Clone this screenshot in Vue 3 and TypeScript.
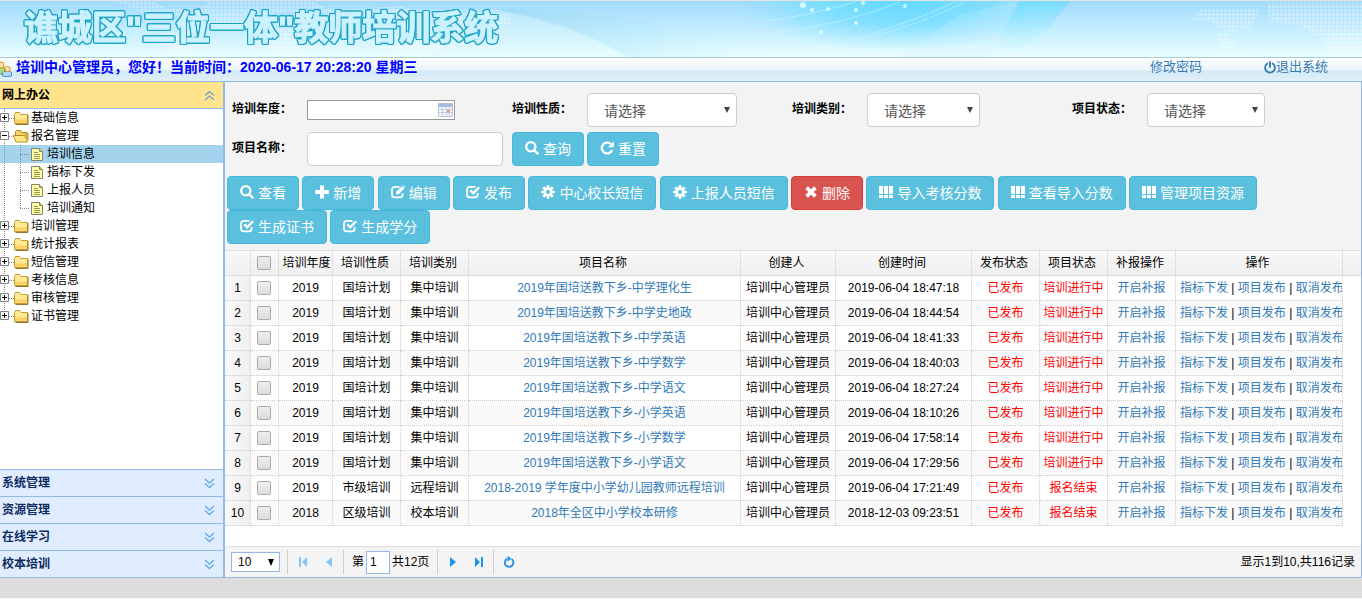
<script setup lang="ts">
import { ref } from 'vue'

interface Glyph { line?: string; fill?: string; width?: number }
interface Action { label: string; icon: string; danger?: boolean }
interface Project { year: string; kind: string; type: string; name: string; time: string; state: string }

const glyphs: Record<string, Glyph> = {
  search: { line: 'M10.400 5.800a4.600 4.600 0 1 1-9.200 0a4.600 4.600 0 0 1 9.200 0zM9 9L13.300 13.300', width: 2.3 },
  plus: { fill: 'M5 .500h4V5h4.800v4H9v4.500H5V9H.2V5H5z' },
  edit: { line: 'M8.500 1.800H3.700A2.700 2.700 0 0 0 1 4.500v5.200a2.700 2.700 0 0 0 2.700 2.700h5.200a2.700 2.700 0 0 0 2.700-2.700V8.500', fill: 'M4.800 9.600l.7-3.100 5.200-5.200 2.400 2.400-5.200 5.200zM11.300.7l.7-.7 2.200 2.200-.7.8z', width: 1.8 },
  check: { line: 'M9.500 1.800H3.700A2.700 2.700 0 0 0 1 4.500v5.200a2.700 2.700 0 0 0 2.700 2.700h5.200a2.700 2.700 0 0 0 2.700-2.700V8', fill: 'M3.400 6L5 4.400l2.200 2.200L12.300 1.400 14 3.100l-6.800 6.800z', width: 1.8 },
  cog: { line: 'M10.400 7a3.400 3.400 0 1 1-6.800 0a3.400 3.400 0 0 1 6.800 0zM7 .2v2.800M7 11v2.800M.2 7H3M11 7h2.800M2.200 2.200l1.900 1.900M9.900 9.900l1.900 1.900M2.200 11.800l1.900-1.900M9.900 4.100l1.900-1.900', width: 2.7 },
  remove: { line: 'M2.600 2.600l8.800 8.800M11.400 2.600l-8.800 8.800', width: 3.8 },
  grid: { fill: 'M0 1h4v8H0zM5 1h4v8H5zM10 1h4v8h-4zM0 10h4v3H0zM5 10h4v3H5zM10 10h4v3h-4z' },
  repeat: { line: 'M10.900 3A5.400 5.400 0 1 0 12.200 9', fill: 'M13.800.2v6H7.800z', width: 2.3 },
}

const actions: Action[] = [
  { label: '查看', icon: 'search' },
  { label: '新增', icon: 'plus' },
  { label: '编辑', icon: 'edit' },
  { label: '发布', icon: 'check' },
  { label: '中心校长短信', icon: 'cog' },
  { label: '上报人员短信', icon: 'cog' },
  { label: '删除', icon: 'remove', danger: true },
  { label: '导入考核分数', icon: 'grid' },
  { label: '查看导入分数', icon: 'grid' },
  { label: '管理项目资源', icon: 'grid' },
  { label: '生成证书', icon: 'check' },
  { label: '生成学分', icon: 'check' },
]
const queries: Action[] = [
  { label: '查询', icon: 'search' },
  { label: '重置', icon: 'repeat' },
]

const tree = [
  { label: '基础信息' },
  { label: '报名管理', children: ['培训信息', '指标下发', '上报人员', '培训通知'] },
  { label: '培训管理' },
  { label: '统计报表' },
  { label: '短信管理' },
  { label: '考核信息' },
  { label: '审核管理' },
  { label: '证书管理' },
]
const active = ref('培训信息')
const panels = ['系统管理', '资源管理', '在线学习', '校本培训']

const national = (subject: string, time: string): Project => ({
  year: '2019', kind: '国培计划', type: '集中培训', name: `2019年国培送教下乡-${subject}`, time: `2019-06-04 ${time}`, state: '培训进行中',
})
const projects: Project[] = [
  national('中学理化生', '18:47:18'),
  national('中学史地政', '18:44:54'),
  national('中学英语', '18:41:33'),
  national('中学数学', '18:40:03'),
  national('中学语文', '18:27:24'),
  national('小学英语', '18:10:26'),
  national('小学数学', '17:58:14'),
  national('小学语文', '17:29:56'),
  { year: '2019', kind: '市级培训', type: '远程培训', name: '2018-2019 学年度中小学幼儿园教师远程培训', time: '2019-06-04 17:21:49', state: '报名结束' },
  { year: '2018', kind: '区级培训', type: '校本培训', name: '2018年全区中小学校本研修', time: '2018-12-03 09:23:51', state: '报名结束' },
]
const headings = ['培训年度', '培训性质', '培训类别', '项目名称', '创建人', '创建时间', '发布状态', '项目状态', '补报操作', '操作']
const pageNumber = ref('1')
</script>

<template>
  <div class="page">
    <header class="banner">
      <svg class="sky" viewBox="0 0 1362 56" preserveAspectRatio="none" aria-hidden="true">
        <defs>
          <linearGradient id="base" x1="0" y1="0" x2="0" y2="1">
            <stop offset="0" stop-color="#a0dafe" /><stop offset=".5" stop-color="#c4edff" /><stop offset="1" stop-color="#e9feff" />
          </linearGradient>
          <radialGradient id="glow" gradientUnits="userSpaceOnUse" cx="0" cy="0" r="1" gradientTransform="translate(900 0) scale(170 50)">
            <stop offset="0" stop-color="#62d8ff" /><stop offset=".5" stop-color="#72deff" stop-opacity=".75" /><stop offset="1" stop-color="#8fe4ff" stop-opacity="0" />
          </radialGradient>
          <linearGradient id="beam" x1="0" y1="0" x2="0" y2="1">
            <stop offset="0" stop-color="#6edcff" /><stop offset="1" stop-color="#c9f8ff" stop-opacity="0" />
          </linearGradient>
          <linearGradient id="shade" x1="0" y1="0" x2="1" y2="0">
            <stop offset="0" stop-color="#9bd7ee" stop-opacity=".6" /><stop offset="1" stop-color="#b8eef8" stop-opacity="0" />
          </linearGradient>
          <pattern id="dots" width="4" height="4" patternUnits="userSpaceOnUse"><rect width="3" height="3" fill="#fff" opacity=".3" /></pattern>
        </defs>
        <rect width="1362" height="56" fill="url(#base)" />
        <rect x="720" width="360" height="56" fill="url(#glow)" />
        <path d="M1020 0h50l-24 30-36 26h-20z" fill="url(#beam)" opacity=".8" />
        <path d="M960 14l58-14-30 56h-90z" fill="#d8f5ff" opacity=".2" />
        <path d="M500 10c55 8 92 24 127 46h120V42C670 20 590 8 500 8z" fill="url(#shade)" />
        <path d="M500 9c50 11 94 29 127 47H390V8z" fill="#e8fcff" opacity=".25" />
        <g fill="none" stroke="#d8faff" opacity=".5">
          <path d="M765 33Q840 25 900 1M832 44Q905 25 955 1M857 40Q925 22 965 1M765 20Q812 14 855 1" />
        </g>
        <g fill="#e5fcff" opacity=".8"><circle cx="803" cy="4" r="3" /><circle cx="812" cy="9" r="2" /><circle cx="828" cy="8" r="2" /><circle cx="856" cy="9" r="2" /><circle cx="856" cy="22" r="2" /><circle cx="905" cy="5" r="2" /><circle cx="863" cy="2" r="2" /><circle cx="821" cy="31" r="2" /></g>
        <path d="M116 1h38l14 7h30l10-7h105l18 8 70-4 22 8-24 8-30-3-22 9-26-4 5-12h-50l-30 16-50-3-25-13h-30zM160 32h32l10 12-18 12h-20zM260 28h55l14 14-30 14h-28zM385 38h50l10 12-26 6h-30zM450 14h60v10h-60z" fill="url(#dots)" />
        <path d="M1200 9h60l-8 16-24 8-18-13h-22zM1266 2h96v54h-34l-8-20-20-12-30-3zM1216 32h14l6 18h-14z" fill="url(#dots)" />
      </svg>
      <h1>谯城区"三位一体"教师培训系统</h1>
    </header>

    <div class="userbar">
      <svg class="people" width="13" height="16" viewBox="0 0 13 16" aria-hidden="true">
        <path d="M-3 13V9q0-3 4-3t4 3v4z" fill="#a9dc76" stroke="#5da22c" />
        <circle cx="1" cy="4" r="3" fill="#ffe3a8" stroke="#d8912e" />
        <path d="M2.500 15v-2q0-3 4.500-3t4.500 3v2q-4 1-9 0z" fill="#b5dcfa" stroke="#3f8ad0" />
        <circle cx="7.500" cy="8" r="2.700" fill="#ffe3a8" stroke="#d8912e" />
      </svg>
      <strong>培训中心管理员，您好！当前时间：2020-06-17 20:28:20 星期三</strong>
      <nav class="account">
        <a href="#">修改密码</a>
        <a href="#"><svg width="12" height="13" viewBox="0 0 12 13" fill="none" stroke="currentColor" stroke-width="1.800" stroke-linecap="round" aria-hidden="true"><path d="M6 1v5M3.400 2.500a4.900 4.900 0 1 0 5.200 0" /></svg>退出系统</a>
      </nav>
    </div>

    <div class="body">
      <aside class="sidebar">
        <button class="fold open" type="button">网上办公
          <svg width="11" height="11" viewBox="0 0 11 11" fill="none" stroke="#6a9fd0" stroke-width="1.300" aria-hidden="true"><path d="M1 5.500l4.500-4 4.500 4M1 10l4.500-4 4.500 4" /></svg>
        </button>
        <ul class="tree">
          <li v-for="(node, i) in tree" :key="node.label">
            <a class="node" href="#">
              <svg width="30" height="18" viewBox="0 0 30 18" aria-hidden="true">
                <path :d="i === tree.length - 1 ? 'M4.500 0v9M9 9.500h5' : 'M4.500 0v18M9 9.500h5'" stroke="#888" stroke-dasharray="1 1" fill="none" />
                <path d="M.5 4.500h8v8h-8z" fill="#fff" stroke="#808080" />
                <path :d="node.children ? 'M2 8.500h5' : 'M2 8.500h5M4.500 6v5'" stroke="#000" />
                <g v-if="node.children" stroke="#b98d25">
                  <path d="M15.500 14V4.500l1-1h4l1 2h5.500V9" fill="#f5d268" />
                  <path d="M13.500 8.500h11l3 6.500H16z" fill="#ffeb83" /><path d="M24.500 8.500l2-2h1.500v7" fill="#e7b542" />
                </g>
                <g v-else>
                  <path d="M14.500 14.500V5.500l1-2h4l1.500 2h6.500v9z" fill="#ffe993" stroke="#c69b34" />
                  <path d="M15 13.500h12V10q-6 1-12 0z" fill="#fbd164" /><path d="M28 6v9.500H15.500" fill="none" stroke="#94762d" />
                </g>
              </svg>{{ node.label }}
            </a>
            <ul v-if="node.children">
              <li v-for="(child, c) in node.children" :key="child">
                <a class="node" :class="{ active: child === active }" href="#" @click.prevent="active = child">
                  <svg width="46" height="18" viewBox="0 0 46 18" aria-hidden="true">
                    <path :d="c === node.children.length - 1 ? 'M4.500 0v18M20.500 0v9M20 9.500h9' : 'M4.500 0v18M20.500 0v18M20 9.500h9'" stroke="#888" stroke-dasharray="1 1" fill="none" />
                    <path d="M31.500 3.500h8l3 3v9h-11z" fill="#ffffa8" stroke="#85856a" /><path d="M39.500 3.500v3h3" fill="#e7c85a" stroke="#85856a" />
                    <path d="M34 7.500h4M34 9.500h6M34 11.500h6M34 13.500h6" stroke="#999957" />
                  </svg>{{ child }}
                </a>
              </li>
            </ul>
          </li>
        </ul>
        <button v-for="panel in panels" :key="panel" class="fold" type="button">{{ panel }}
          <svg width="11" height="11" viewBox="0 0 11 11" fill="none" stroke="#63aeea" stroke-width="1.400" aria-hidden="true"><path d="M1 1l4.500 4L10 1M1 5.500l4.500 4 4.500-4" /></svg>
        </button>
      </aside>

      <main class="content">
        <form class="filters" @submit.prevent>
          <label for="year">培训年度：</label>
          <div class="date">
            <input id="year" type="text">
            <svg width="15" height="14" viewBox="0 0 15 14" aria-hidden="true">
              <path d="M.5.5h14v13H.5z" fill="#f4f7fd" stroke="#b6c2dc" /><path d="M1 1h13v3H1z" fill="#a5bce2" />
              <path d="M1 6.500h13M1 9.500h13M4.500 4v9M8.500 4v9M11.500 4v9" stroke="#c4d0e7" /><path d="M9 7h3v3H9z" fill="#ee9a86" />
            </svg>
          </div>
          <label for="kind">培训性质：</label>
          <div class="pick kind"><select id="kind"><option>请选择</option></select></div>
          <label for="type">培训类别：</label>
          <div class="pick type"><select id="type"><option>请选择</option></select></div>
          <label for="state">项目状态：</label>
          <div class="pick state"><select id="state"><option>请选择</option></select></div>
          <label for="name">项目名称：</label>
          <div><input id="name" class="name" type="text"></div>
          <div class="queries">
            <button v-for="q in queries" :key="q.label" class="btn" type="button">
              <svg width="14" height="14" viewBox="0 0 14 14" aria-hidden="true">
                <path v-if="glyphs[q.icon].line" :d="glyphs[q.icon].line" fill="none" stroke="currentColor" :stroke-width="glyphs[q.icon].width" />
                <path v-if="glyphs[q.icon].fill" :d="glyphs[q.icon].fill" fill="currentColor" />
              </svg><span>{{ q.label }}</span>
            </button>
          </div>
        </form>

        <div class="toolbar">
          <template v-for="a in actions" :key="a.label">
            <button class="btn" :class="{ danger: a.danger }" type="button">
              <svg width="14" height="14" viewBox="0 0 14 14" aria-hidden="true">
                <path v-if="glyphs[a.icon].line" :d="glyphs[a.icon].line" fill="none" stroke="currentColor" :stroke-width="glyphs[a.icon].width" />
                <path v-if="glyphs[a.icon].fill" :d="glyphs[a.icon].fill" fill="currentColor" />
              </svg><span>{{ a.label }}</span>
            </button>{{ ' ' }}
          </template>
        </div>

        <div class="records">
          <table>
            <colgroup>
              <col class="c-num"><col class="c-tick"><col class="c-year"><col class="c-mid"><col class="c-mid"><col class="c-name">
              <col class="c-user"><col class="c-time"><col class="c-mid"><col class="c-mid"><col class="c-mid"><col class="c-ops"><col>
            </colgroup>
            <thead>
              <tr>
                <th></th>
                <th class="tick"><input type="checkbox" aria-label="全选"></th>
                <th v-for="h in headings" :key="h">{{ h }}</th>
                <th class="rest"></th>
              </tr>
            </thead>
            <tbody>
              <tr v-for="(p, i) in projects" :key="p.time">
                <td class="num">{{ i + 1 }}</td>
                <td class="tick"><input type="checkbox" :aria-label="p.name"></td>
                <td>{{ p.year }}</td>
                <td>{{ p.kind }}</td>
                <td>{{ p.type }}</td>
                <td><a href="#">{{ p.name }}</a></td>
                <td>培训中心管理员</td>
                <td>{{ p.time }}</td>
                <td class="red">已发布</td>
                <td class="red">{{ p.state }}</td>
                <td><a href="#">开启补报</a></td>
                <td class="ops"><a href="#">指标下发</a> | <a href="#">项目发布</a> | <a href="#">取消发布</a></td>
              </tr>
            </tbody>
          </table>
        </div>

        <footer class="pager">
          <div class="pick size"><select aria-label="每页条数"><option>10</option></select></div>
          <i class="bar"></i>
          <button class="step dim" type="button" aria-label="首页"><svg width="10" height="12" viewBox="0 0 10 12"><path d="M1 1h2v10H1zM9 1v10L4 6z" /></svg></button>
          <button class="step dim" type="button" aria-label="上一页"><svg width="10" height="12" viewBox="0 0 10 12"><path d="M8 1v10L2 6z" /></svg></button>
          <i class="bar"></i>
          <label class="goto">第<input v-model="pageNumber" type="text">共12页</label>
          <i class="bar"></i>
          <button class="step" type="button" aria-label="下一页"><svg width="10" height="12" viewBox="0 0 10 12"><path d="M2 1v10l6-5z" /></svg></button>
          <button class="step" type="button" aria-label="末页"><svg width="10" height="12" viewBox="0 0 10 12"><path d="M7 1h2v10H7zM1 1v10l5-5z" /></svg></button>
          <i class="bar"></i>
          <button class="step" type="button" aria-label="刷新"><svg width="12" height="12" viewBox="0 0 12 12"><path d="M8.500 3A4.300 4.300 0 1 1 4 2.800" fill="none" stroke="#2e8fe0" stroke-width="1.900" /><path d="M4.500 0l4 2.500-4 3z" /></svg></button>
          <span class="total">显示1到10,共116记录</span>
        </footer>
      </main>
    </div>
    <div class="base"></div>
  </div>
</template>

<style>
body { margin: 0; }
</style>

<style scoped>
.page, .page * { box-sizing: border-box; }
.page {
  display: flex; flex-direction: column; min-height: 100vh; background: #fff; color: #000;
  font: 12px/18px "Liberation Sans", "Noto Sans CJK SC", sans-serif;
}
button, input, select { font: inherit; margin: 0; }
a { color: #337ab7; text-decoration: none; }
svg { flex: none; }
.banner { position: relative; height: 58px; padding: 2px 24px 0; border-top: 1px solid #e4e4e4; border-bottom: 1px solid #a6cbd3; background: #c4edff; overflow: hidden; }
.sky { position: absolute; inset: 0; width: 100%; height: 100%; }
h1 {
  position: relative; margin: 0; font: bold 34px/50px "Liberation Sans", "Noto Sans CJK SC", sans-serif; color: #cdf2ff; white-space: nowrap;
  -webkit-text-stroke: 1px #cdf2ff;
  filter: drop-shadow(1px 0 0 #1ba3c4) drop-shadow(-1px 0 0 #1ba3c4) drop-shadow(0 1px 0 #1ba3c4) drop-shadow(0 -1px 0 #1ba3c4);
}
.userbar {
  display: flex; align-items: center; gap: 3px; height: 24px; padding-right: 34px; padding-bottom: 5px; border-bottom: 1px solid #95b8e7;
  background: linear-gradient(#fefefe, #e9f4fa 12px, #d2e9f5 13px, #e0f0f8); font-size: 14px;
}
.people { margin-top: 4px; }
.userbar strong { color: #00f; }
.account { display: flex; gap: 62px; margin-left: auto; font-size: 13px; }
.account a { display: flex; align-items: center; }
.body { display: flex; flex: 1; border-bottom: 1px solid #95b8e7; }
.sidebar { display: flex; flex-direction: column; flex: none; width: 225px; border-right: 2px solid #95b8e7; }
.fold {
  display: flex; align-items: center; justify-content: space-between; height: 27px; padding: 0 8px 0 2px; border: 0; border-top: 1px solid #95b8e7;
  background: #e0ecff; color: #0e2d5f; font-weight: bold; text-align: left;
}
.fold.open { border-top: 0; border-bottom: 1px solid #95b8e7; background: #ffe48d; color: #000; }
.tree { flex: 1; }
.tree, .tree ul { margin: 0; padding: 0; list-style: none; }
.node { display: flex; align-items: center; gap: 1px; height: 18px; color: #000; }
.node.active { background: #a4d3ee; }
.content { display: flex; flex: 1; flex-direction: column; min-width: 0; border-right: 1px solid #95b8e7; background: #f3f3f3; }
.filters { display: grid; grid-template-columns: repeat(4, 75px 205px); grid-auto-rows: 34px; row-gap: 5px; align-items: center; padding: 11px 7px 10px; }
.filters label { padding-bottom: 2px; font-weight: bold; }
.date { position: relative; width: 148px; height: 20px; }
.date input { display: block; width: 100%; height: 20px; border: 1px solid #999; background: #fff; }
.date svg { position: absolute; top: 3px; right: 2px; }
.name { display: block; width: 196px; height: 34px; padding: 0 12px; border: 1px solid #ccc; border-radius: 4px; background: #fff; font-size: 14px; }
.pick { position: relative; }
.pick::after { content: ""; position: absolute; top: 14px; right: 7px; border: solid transparent; border-width: 6px 3px 0; border-top-color: #444; pointer-events: none; }
.pick select { display: block; width: 100%; height: 34px; padding: 2px 12px 0 16px; border: 1px solid #ccc; border-radius: 4px; background: #fff; color: #555; font-size: 14px; appearance: none; }
.kind { width: 150px; }
.type { width: 113px; }
.state { width: 118px; }
.queries { display: flex; gap: 3px; grid-column: span 2; }
.btn {
  display: inline-flex; align-items: center; gap: 4px; height: 34px; padding: 0 12px; border: 1px solid #46b8da; border-radius: 4px;
  background: #5bc0de; color: #fff; font-size: 14px; line-height: 20px; white-space: nowrap; vertical-align: top;
}
.btn svg { margin-bottom: 2px; overflow: visible; }
.danger { border-color: #d43f3a; background: #d9534f; }
.toolbar { padding: 0 10px 6px 2px; line-height: 34px; }
.records { flex: 1; background: #fff; }
table { width: 100%; border-collapse: separate; border-spacing: 0; table-layout: fixed; }
.c-num { width: 26px; }
.c-tick { width: 28px; }
.c-year { width: 54px; }
.c-mid { width: 68px; }
.c-name { width: 272px; }
.c-user { width: 95px; }
.c-time { width: 136px; }
.c-ops { width: 167px; }
th, td { height: 25px; padding: 0; border-right: 1px dotted #ccc; border-bottom: 1px dotted #ccc; font-weight: normal; text-align: center; white-space: nowrap; overflow: hidden; }
thead tr { background: linear-gradient(#f9f9f9, #efefef); }
th { height: 26px; padding-right: 3px; border-top: 1px solid #ddd; border-bottom: 1px solid #ddd; }
th:nth-child(3) { padding: 0 0 0 2px; }
.tick { padding: 0 2px 1px 0; }
.rest { border-right: 0; }
tbody tr:nth-child(even) td { background: #fafafa; }
tbody tr .num, tbody tr:nth-child(even) .num { background: linear-gradient(90deg, #f9f9f9, #efefef); }
td.red { color: #f00; }
td.ops { padding-left: 4px; text-align: left; }
input[type="checkbox"] { display: block; width: 14px; height: 14px; margin: 0 auto; border: 1px solid #aaa; border-radius: 2px; background: linear-gradient(#eee, #dcdcdc); appearance: none; }
.pager { display: flex; align-items: center; height: 31px; padding: 0 6px; border-top: 1px solid #ddd; border-radius: 5px 5px 0 0; background: #f4f4f4; }
.size { width: 49px; margin-right: 7px; }
.size::after { top: 7px; right: 6px; border-top-color: #000; border-width: 7px 3px 0; }
.pick.size select { height: 20px; padding: 0 6px; border-color: #95b8e7; border-radius: 0; color: #000; font-size: 12px; }
.bar { width: 1px; height: 24px; margin-right: 2px; background: #ccc; }
.step { display: flex; align-items: center; justify-content: center; width: 26px; height: 26px; padding: 0; border: 0; background: none; }
.bar + .step { margin-left: 1px; }
.step svg { margin-right: 2px; fill: #1b95ec; }
.step.dim svg { fill: #86c4f1; }
.goto { display: flex; align-items: center; margin: 0 8px 0 6px; gap: 2px; }
.goto input { width: 24px; height: 23px; padding: 0 3px; border: 1px solid #95b8e7; background: #fff; }
.total { margin-left: auto; }
.base { height: 21px; border-bottom: 1px solid #f5f5f5; background: #dedcdd; }
</style>
